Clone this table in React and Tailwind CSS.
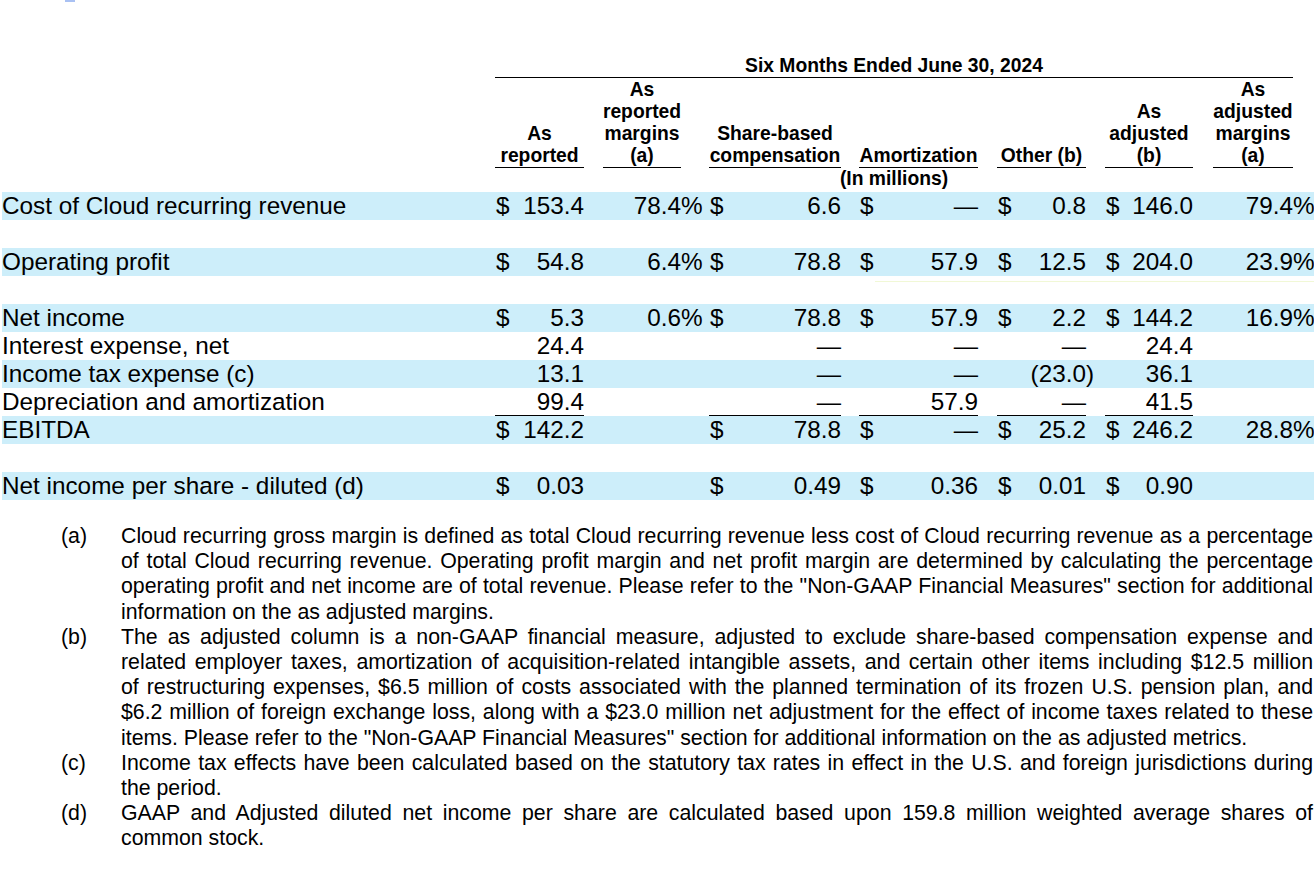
import React from 'react';

const COLS = ['w-[89px]', 'w-[78px]', 'w-[132px]', 'w-[119px]', 'w-[89px]', 'w-[88px]', 'w-[80px]'];
const GAPS = ['w-[19px]', 'w-[28px]', 'w-[18px]', 'w-[19px]', 'w-[19px]', 'w-[20px]', 'w-[19px]'];

const HEADERS = [
  ['As', 'reported'],
  ['As', 'reported', 'margins', '(a)'],
  ['Share-based', 'compensation'],
  ['Amortization'],
  ['Other (b)'],
  ['As', 'adjusted', '(b)'],
  ['As', 'adjusted', 'margins', '(a)'],
];

// cell: [dollar, value, suffix]
const D = (v, s = '') => [true, v, s];
const N = (v, s = '') => [false, v, s];
const E = null;

const ROWS = [
  { label: 'Cost of Cloud recurring revenue', bar: true, cells: [D('153.4'), N('78.4', '%'), D('6.6'), D('—'), D('0.8'), D('146.0'), N('79.4', '%')] },
  { blank: true },
  { label: 'Operating profit', bar: true, cells: [D('54.8'), N('6.4', '%'), D('78.8'), D('57.9'), D('12.5'), D('204.0'), N('23.9', '%')] },
  { blank: true, faint: true },
  { label: 'Net income', bar: true, cells: [D('5.3'), N('0.6', '%'), D('78.8'), D('57.9'), D('2.2'), D('144.2'), N('16.9', '%')] },
  { label: 'Interest expense, net', cells: [N('24.4'), E, N('—'), N('—'), N('—'), N('24.4'), E] },
  { label: 'Income tax expense (c)', bar: true, cells: [N('13.1'), E, N('—'), N('—'), N('(23.0', ')'), N('36.1'), E] },
  { label: 'Depreciation and amortization', under: [0, 2, 3, 4, 5], cells: [N('99.4'), E, N('—'), N('57.9'), N('—'), N('41.5'), E] },
  { label: 'EBITDA', bar: true, cells: [D('142.2'), E, D('78.8'), D('—'), D('25.2'), D('246.2'), N('28.8', '%')] },
  { blank: true },
  { label: 'Net income per share - diluted (d)', bar: true, cells: [D('0.03'), E, D('0.49'), D('0.36'), D('0.01'), D('0.90'), E] },
];

const NOTES = [
  ['(a)', [
    'Cloud recurring gross margin is defined as total Cloud recurring revenue less cost of Cloud recurring revenue as a percentage',
    'of total Cloud recurring revenue. Operating profit margin and net profit margin are determined by calculating the percentage',
    'operating profit and net income are of total revenue. Please refer to the "Non-GAAP Financial Measures" section for additional',
    'information on the as adjusted margins.',
  ]],
  ['(b)', [
    'The as adjusted column is a non-GAAP financial measure, adjusted to exclude share-based compensation expense and',
    'related employer taxes, amortization of acquisition-related intangible assets, and certain other items including $12.5 million',
    'of restructuring expenses, $6.5 million of costs associated with the planned termination of its frozen U.S. pension plan, and',
    '$6.2 million of foreign exchange loss, along with a $23.0 million net adjustment for the effect of income taxes related to these',
    'items. Please refer to the "Non-GAAP Financial Measures" section for additional information on the as adjusted metrics.',
  ]],
  ['(c)', [
    'Income tax effects have been calculated based on the statutory tax rates in effect in the U.S. and foreign jurisdictions during',
    'the period.',
  ]],
  ['(d)', [
    'GAAP and Adjusted diluted net income per share are calculated based upon 159.8 million weighted average shares of',
    'common stock.',
  ]],
];

function Cell({ cell, width, under }) {
  const base = `${width} h-[28px] flex pl-[1px] whitespace-nowrap ${under ? 'border-b border-black' : ''}`;
  if (!cell) return <div className={base} />;
  const [dollar, v, s] = cell;
  return (
    <div className={`${base} ${dollar ? 'justify-between' : 'justify-end'}`}>
      {dollar && <span>$</span>}
      <span>
        {v}
        {s && <span className="inline-block w-0 whitespace-nowrap">{s}</span>}
      </span>
    </div>
  );
}

function Row({ row }) {
  if (row.blank) {
    return (
      <div className="h-[28px] ml-[2px] pt-[5px]">
        {row.faint && <div className="ml-[873px] h-px bg-[#f1f8d6]" />}
      </div>
    );
  }
  return (
    <div className={`flex h-[28px] leading-[28px] ml-[2px] ${row.bar ? 'bg-[#cdeefa]' : ''}`}>
      <div className="w-[493px] whitespace-nowrap">{row.label}</div>
      {row.cells.map((c, i) => (
        <React.Fragment key={i}>
          <Cell cell={c} width={COLS[i]} under={row.under && row.under.includes(i)} />
          <div className={GAPS[i]} />
        </React.Fragment>
      ))}
    </div>
  );
}

export default function App() {
  return (
    <div
      className="w-[1314px] h-[892px] bg-white text-black overflow-hidden"
      style={{ fontFamily: '"Liberation Sans", Arial, sans-serif' }}
    >
      <div className="ml-[65px] w-[10px] h-[2px] bg-[#a9c1f3]" />
      <div className="h-[53px]" />

      {/* Header */}
      <div className="font-bold text-[19.3px] leading-[22px]">
        <div className="flex pl-[495px]">
          <div className="w-[798px] border-b border-black text-center h-[23px]">Six Months Ended June 30, 2024</div>
        </div>
        <div className="flex pl-[495px] mt-[1px]">
          {HEADERS.map((h, i) => (
            <React.Fragment key={i}>
              <div className={`${COLS[i]} h-[89px] border-b border-black flex flex-col justify-end items-center text-center whitespace-nowrap`}>
                {h.map((l, j) => (
                  <div key={j}>{l}</div>
                ))}
              </div>
              {i < 6 && <div className={GAPS[i]} />}
            </React.Fragment>
          ))}
        </div>
        <div className="flex pl-[495px]">
          <div className="w-[798px] text-center h-[22px]">(In millions)</div>
        </div>
      </div>

      {/* Body */}
      <div className="mt-[2px] text-[24.3px]">
        {ROWS.map((r, i) => (
          <Row key={i} row={r} />
        ))}
      </div>

      {/* Footnotes */}
      <div className="mt-[24px] text-[21.3px] leading-[25.2px]">
        {NOTES.map(([k, lines]) => (
          <div key={k} className="flex">
            <div className="w-[121px] pl-[61px] shrink-0">{k}</div>
            <div className="w-[1192px]">
              {lines.map((l, j) => (
                <div
                  key={j}
                  className={j < lines.length - 1 ? 'text-justify [text-align-last:justify]' : 'text-left'}
                >
                  {l}
                </div>
              ))}
            </div>
          </div>
        ))}
      </div>
    </div>
  );
}
